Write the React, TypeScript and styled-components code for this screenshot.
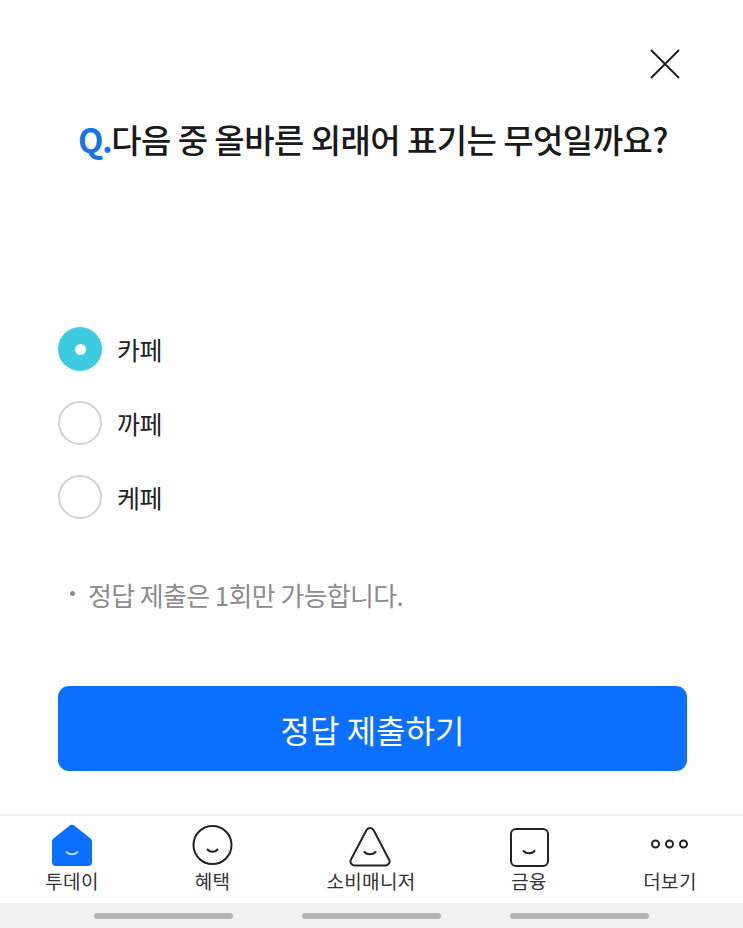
import styled, { createGlobalStyle } from 'styled-components';

const GlobalStyle = createGlobalStyle`
  html, body {
    margin: 0;
    padding: 0;
    background: #fff;
  }
  body {
    font-family: "Noto Sans CJK KR", "Noto Sans", sans-serif;
  }
`;

const Screen = styled.div`
  width: 743px;
  height: 928px;
  display: flex;
  flex-direction: column;
  overflow: hidden;
  background: #fff;
`;

const Content = styled.main`
  flex: 1;
  display: flex;
  flex-direction: column;
  padding: 47px 57px 0 58px;
`;

const CloseRow = styled.div`
  display: flex;
  justify-content: flex-end;
  height: 36px;
  padding-right: 3px;
`;

const Question = styled.h1`
  margin: 33px -30px 0 -28px;
  font-size: 33px;
  line-height: 46px;
  font-weight: 500;
  letter-spacing: -0.55px;
  color: #1a1a1a;
  text-align: center;
  white-space: nowrap;
`;

const QMark = styled.span`
  color: #1673e6;
  font-weight: 700;
  letter-spacing: -1.5px;
`;

const Options = styled.div`
  margin-top: 165px;
  display: flex;
  flex-direction: column;
  gap: 30px;
`;

const Option = styled.label`
  display: flex;
  align-items: center;
  gap: 15px;
  height: 44px;
  font-size: 25px;
  letter-spacing: -0.4px;
  color: #222;
`;

const Radio = styled.span<{ $checked?: boolean }>`
  width: 44px;
  height: 44px;
  box-sizing: border-box;
  border-radius: 50%;
  display: flex;
  align-items: center;
  justify-content: center;
  background: ${p => (p.$checked ? '#3ccbdf' : '#fff')};
  border: ${p => (p.$checked ? 'none' : '2px solid #d2d2d2')};

  &::after {
    content: '';
    display: ${p => (p.$checked ? 'block' : 'none')};
    width: 11px;
    height: 11px;
    border-radius: 50%;
    background: #fff;
  }
`;

const Note = styled.p`
  margin: 57px 0 0;
  display: flex;
  font-size: 26px;
  line-height: 38px;
  letter-spacing: -0.65px;
  color: #8c8c8c;
  white-space: nowrap;
`;

const NoteDot = styled.span`
  width: 5px;
  height: 5px;
  margin: 15px 13px 0 12px;
  border-radius: 50%;
  background: #8c8c8c;
`;

const SubmitButton = styled.button`
  margin-top: 72px;
  height: 85px;
  width: 629px;
  padding: 0;
  border: none;
  border-radius: 11px;
  background: #0b6fff;
  color: #fff;
  font-family: inherit;
  font-size: 32px;
  font-weight: 400;
`;

const TabBar = styled.nav`
  height: 87px;
  border-top: 2px solid #efefef;
  display: grid;
  grid-template-columns: 144px 137px 180px 136px 146px;
  background: #fff;
`;

const Tab = styled.div`
  display: flex;
  flex-direction: column;
  align-items: center;
  padding-top: 7px;
`;

const TabIcon = styled.svg`
  width: 44px;
  height: 44px;
  display: block;
`;

const TabLabel = styled.span`
  font-size: 19px;
  line-height: 28px;
  letter-spacing: 0.3px;
  color: #333;
  white-space: nowrap;
`;

const SystemBar = styled.div`
  height: 25px;
  background: #f1f1f1;
  display: flex;
  justify-content: center;
  gap: 69px;
  padding-top: 10px;
  box-sizing: border-box;
`;

const SystemPill = styled.span`
  width: 139px;
  height: 6px;
  border-radius: 3px;
  background: #b4b4b4;
`;

export default function App() {
  return (
    <Screen>
      <GlobalStyle />
      <Content>
        <CloseRow>
          <svg width="36" height="36" viewBox="0 0 36 36" fill="none" stroke="#222" strokeWidth="2">
            <path d="M4 3 L32 31 M32 3 L4 31" />
          </svg>
        </CloseRow>
        <Question>
          <QMark>Q.</QMark>다음 중 올바른 외래어 표기는 무엇일까요?
        </Question>
        <Options>
          <Option><Radio $checked />카페</Option>
          <Option><Radio />까페</Option>
          <Option><Radio />케페</Option>
        </Options>
        <Note><NoteDot />정답 제출은 1회만 가능합니다.</Note>
        <SubmitButton>정답 제출하기</SubmitButton>
      </Content>
      <TabBar>
        <Tab>
          <TabIcon viewBox="0 0 44 44">
            <path d="M19.5 2.700a4 4 0 0 1 5 0L40.500 15.500a4 4 0 0 1 1.500 3V39a4 4 0 0 1-4 4H6a4 4 0 0 1-4-4V18.500a4 4 0 0 1 1.500-3z" fill="#0b6fff" />
            <path d="M16.500 29c2.500 3 8.500 3 11 0" fill="none" stroke="#a9d2ff" strokeWidth="2" strokeLinecap="round" />
          </TabIcon>
          <TabLabel>투데이</TabLabel>
        </Tab>
        <Tab>
          <TabIcon viewBox="0 0 44 44" fill="none" stroke="#222" strokeWidth="2">
            <circle cx="21.500" cy="22" r="19" />
            <path d="M16.500 26.500c2.500 3 7.500 3 10 0" strokeLinecap="round" />
          </TabIcon>
          <TabLabel>혜택</TabLabel>
        </Tab>
        <Tab>
          <TabIcon viewBox="0 0 44 44" fill="none" stroke="#222" strokeWidth="2">
            <path d="M17.500 7a4 4 0 0 1 7 0l15.500 29.500a4 4 0 0 1-3.500 6H5.500a4 4 0 0 1-3.500-6z" />
            <path d="M15.500 29c2.500 3 8.500 3 11 0" strokeLinecap="round" />
          </TabIcon>
          <TabLabel>소비매니저</TabLabel>
        </Tab>
        <Tab>
          <TabIcon viewBox="0 0 44 44" fill="none" stroke="#222" strokeWidth="2">
            <rect x="4" y="6" width="37" height="37" rx="5" />
            <path d="M16.500 28c2.500 3 8.500 3 11 0" strokeLinecap="round" />
          </TabIcon>
          <TabLabel>금융</TabLabel>
        </Tab>
        <Tab>
          <TabIcon viewBox="0 0 44 44" fill="none" stroke="#222" strokeWidth="2">
            <circle cx="7.500" cy="21" r="3.500" />
            <circle cx="21.500" cy="21" r="3.500" />
            <circle cx="35.500" cy="21" r="3.500" />
          </TabIcon>
          <TabLabel>더보기</TabLabel>
        </Tab>
      </TabBar>
      <SystemBar>
        <SystemPill />
        <SystemPill />
        <SystemPill />
      </SystemBar>
    </Screen>
  );
}
